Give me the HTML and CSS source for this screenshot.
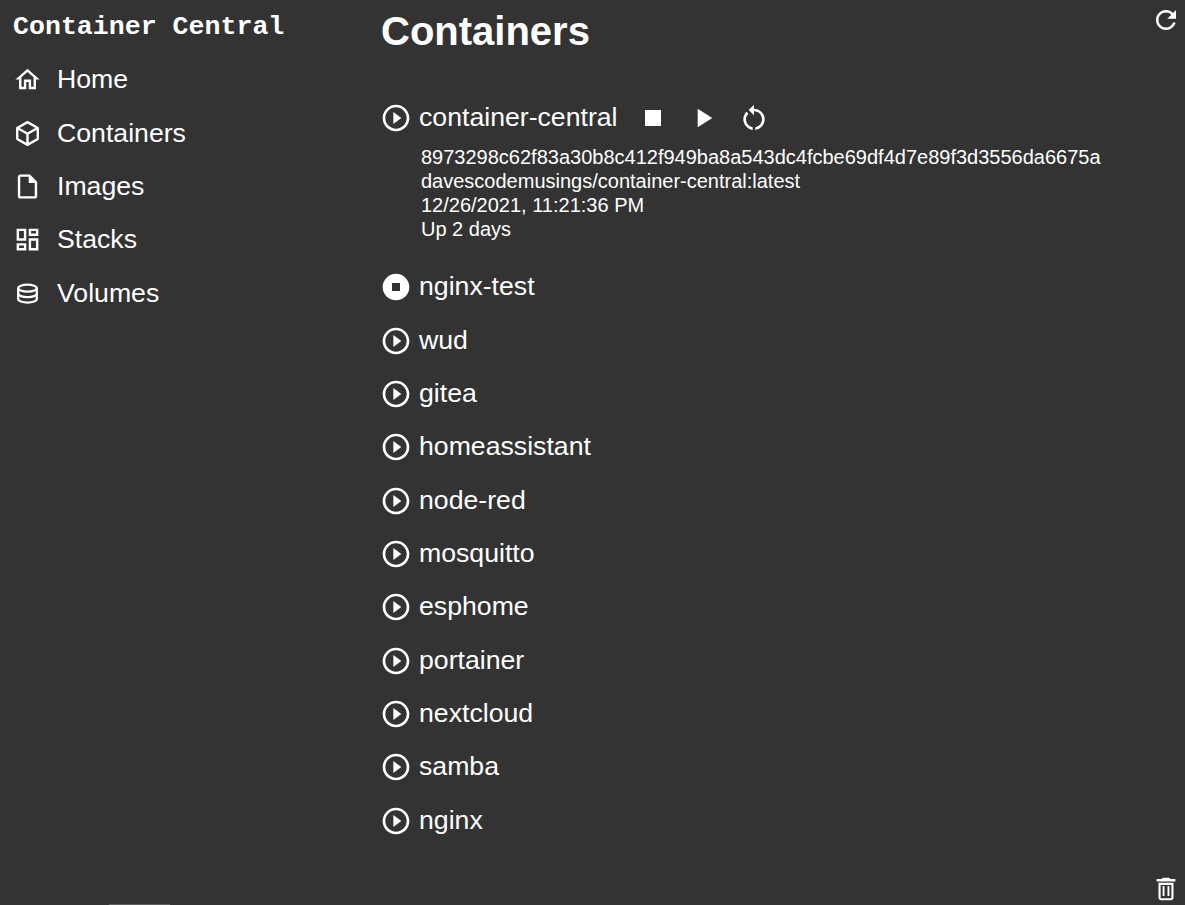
FILE: index.html
```html
<!DOCTYPE html>
<html lang="en">
<head>
    <meta charset="UTF-8"/>
    <meta name="viewport" content="width=device-width, initial-scale=1"/>
    <title>Container Central</title>
    <link rel="stylesheet" href="styles.css">
</head>
<body>

<!-- Icons -->
<svg class="icon-defs" xmlns="http://www.w3.org/2000/svg" aria-hidden="true">
    <symbol id="i-home" viewBox="0 0 24 24"><path d="M12 5.690l5 4.500V18h-2v-6H9v6H7v-7.810l5-4.500M12 3L2 12h3v8h6v-6h2v6h6v-8h3L12 3z"/></symbol>
    <symbol id="i-box" viewBox="0 0 24 24"><path d="M12 2.600l8.500 4.800v9.200L12 21.400l-8.500-4.800V7.400z M4 7.600l8 4.600 8-4.600 M12 12.200V21" fill="none" stroke="currentColor" stroke-width="2" stroke-linejoin="round"/></symbol>
    <symbol id="i-file" viewBox="0 0 24 24"><path d="M14 2H6c-1.100 0-2 .9-2 2v16c0 1.100.9 2 2 2h12c1.100 0 2-.9 2-2V8l-6-6zM6 20V4h7v5h5v11H6z"/></symbol>
    <symbol id="i-stacks" viewBox="0 0 24 24"><path d="M19 5v2h-4V5h4M9 5v6H5V5h4m10 8v6h-4v-6h4M9 17v2H5v-2h4M21 3h-8v6h8V3zM11 3H3v10h8V3zm10 8h-8v10h8V11zm-10 4H3v6h8v-6z"/></symbol>
    <symbol id="i-db" viewBox="0 0 24 24"><g fill="none" stroke="currentColor" stroke-width="1.900"><ellipse cx="12" cy="7.600" rx="7.700" ry="2.900"/><path d="M4.300 7.600v9c0 1.600 3.400 2.900 7.700 2.900s7.700-1.300 7.700-2.900v-9"/><path d="M4.300 12.100c0 1.600 3.400 2.900 7.700 2.900s7.700-1.300 7.700-2.900"/></g></symbol>
    <symbol id="i-play-circle" viewBox="0 0 24 24"><path d="M10 16.500l6-4.500-6-4.500v9zM12 2C6.480 2 2 6.480 2 12s4.480 10 10 10 10-4.480 10-10S17.520 2 12 2zm0 18c-4.410 0-8-3.590-8-8s3.590-8 8-8 8 3.590 8 8-3.590 8-8 8z"/></symbol>
    <symbol id="i-stop-circle" viewBox="0 0 24 24"><path d="M12 2C6.480 2 2 6.480 2 12s4.480 10 10 10 10-4.480 10-10S17.520 2 12 2zm3 13H9V9h6v6z"/></symbol>
    <symbol id="i-stop" viewBox="0 0 24 24"><path d="M6 6h12v12H6z"/></symbol>
    <symbol id="i-play" viewBox="0 0 24 24"><path d="M8 5v14l11-7z"/></symbol>
    <symbol id="i-restart" viewBox="0 0 24 24"><path d="M12 5V2L8 6l4 4V7c3.310 0 6 2.690 6 6 0 2.970-2.170 5.430-5 5.910v2.020c3.950-.49 7-3.850 7-7.930 0-4.420-3.580-8-8-8zm-6 8c0-1.650.67-3.150 1.760-4.240L6.340 7.340C4.900 8.790 4 10.790 4 13c0 4.080 3.050 7.440 7 7.930v-2.020c-2.830-.48-5-2.940-5-5.910z"/></symbol>
    <symbol id="i-refresh" viewBox="0 0 24 24"><path d="M17.650 6.350C16.200 4.900 14.210 4 12 4c-4.420 0-7.990 3.580-7.990 8s3.570 8 7.990 8c3.730 0 6.840-2.550 7.730-6h-2.080c-.82 2.330-3.040 4-5.650 4-3.310 0-6-2.690-6-6s2.690-6 6-6c1.660 0 3.140.69 4.220 1.780L13 11h7V4l-2.350 2.350z"/></symbol>
    <symbol id="i-trash" viewBox="0 0 24 24"><path d="M6 19c0 1.100.9 2 2 2h8c1.100 0 2-.9 2-2V7H6v12zM7.700 8.700h8.600v10.600H7.700zM15.500 4l-1-1h-5l-1 1H4.500v2h15V4z" fill-rule="evenodd"/><path d="M9.300 9.500h1.500v8H9.300zM13.200 9.500h1.500v8h-1.500z"/></symbol>
</svg>

<div class="layout">
    <nav class="sidebar">
        <div class="brand">Container Central</div>
        <a class="nav-item" href="#"><svg class="icon"><use href="#i-home"/></svg>Home</a>
        <a class="nav-item" href="#"><svg class="icon"><use href="#i-box"/></svg>Containers</a>
        <a class="nav-item" href="#"><svg class="icon"><use href="#i-file"/></svg>Images</a>
        <a class="nav-item" href="#"><svg class="icon"><use href="#i-stacks"/></svg>Stacks</a>
        <a class="nav-item" href="#"><svg class="icon"><use href="#i-db"/></svg>Volumes</a>
    </nav>

    <main class="content">
        <h1>Containers</h1>
        <ul class="container-list">
            <li class="container open">
                <div class="row">
                    <svg class="state"><use href="#i-play-circle"/></svg>
                    <span class="name">container-central</span>
                    <span class="actions">
                        <svg class="action"><use href="#i-stop"/></svg>
                        <svg class="action"><use href="#i-play"/></svg>
                        <svg class="action"><use href="#i-restart"/></svg>
                    </span>
                </div>
                <div class="details">
                    <div>8973298c62f83a30b8c412f949ba8a543dc4fcbe69df4d7e89f3d3556da6675a</div>
                    <div>davescodemusings/container-central:latest</div>
                    <div>12/26/2021, 11:21:36 PM</div>
                    <div>Up 2 days</div>
                </div>
            </li>
            <li class="container"><div class="row"><svg class="state"><use href="#i-stop-circle"/></svg><span class="name">nginx-test</span></div></li>
            <li class="container"><div class="row"><svg class="state"><use href="#i-play-circle"/></svg><span class="name">wud</span></div></li>
            <li class="container"><div class="row"><svg class="state"><use href="#i-play-circle"/></svg><span class="name">gitea</span></div></li>
            <li class="container"><div class="row"><svg class="state"><use href="#i-play-circle"/></svg><span class="name">homeassistant</span></div></li>
            <li class="container"><div class="row"><svg class="state"><use href="#i-play-circle"/></svg><span class="name">node-red</span></div></li>
            <li class="container"><div class="row"><svg class="state"><use href="#i-play-circle"/></svg><span class="name">mosquitto</span></div></li>
            <li class="container"><div class="row"><svg class="state"><use href="#i-play-circle"/></svg><span class="name">esphome</span></div></li>
            <li class="container"><div class="row"><svg class="state"><use href="#i-play-circle"/></svg><span class="name">portainer</span></div></li>
            <li class="container"><div class="row"><svg class="state"><use href="#i-play-circle"/></svg><span class="name">nextcloud</span></div></li>
            <li class="container"><div class="row"><svg class="state"><use href="#i-play-circle"/></svg><span class="name">samba</span></div></li>
            <li class="container"><div class="row"><svg class="state"><use href="#i-play-circle"/></svg><span class="name">nginx</span></div></li>
        </ul>
    </main>

    <aside class="tools">
        <svg class="tool"><use href="#i-refresh"/></svg>
        <svg class="tool"><use href="#i-trash"/></svg>
    </aside>
</div>

<div class="scroll-thumb"></div>

</body>
</html>
```

FILE: styles.css
```css
html, body {
  height: 100%;
}
body {
  margin: 0;
  background-color: #333;
  color: #fff;
  font-family: "Liberation Sans", Arial, sans-serif;
  overflow: hidden;
  position: relative;
}
a {
  color: inherit;
  text-decoration: none;
}
svg {
  fill: currentColor;
  display: block;
  flex-shrink: 0;
}
.icon-defs {
  width: 0;
  height: 0;
  position: absolute;
}
.layout {
  display: flex;
  height: 100%;
}

/* Side navigation */
.sidebar {
  width: 381px;
  flex-shrink: 0;
  padding: 10px 0 0 13px;
  box-sizing: border-box;
}
.brand {
  font-family: "Liberation Mono", "Courier New", monospace;
  font-weight: bold;
  font-size: 26.6px;
  line-height: 34px;
  margin-bottom: 9.1px;
}
.nav-item {
  display: flex;
  align-items: center;
  gap: 15px;
  height: 53.33px;
  font-size: 26.67px;
}
.icon {
  width: 29px;
  height: 29px;
}

/* Main list */
.content {
  flex: 1;
  min-width: 0;
}
h1 {
  font-size: 40px;
  line-height: 44px;
  margin: 9px 0 38px;
}
.container-list {
  list-style: none;
  margin: 0;
  padding: 0;
}
.row {
  display: flex;
  align-items: center;
  height: 53.33px;
}
.state {
  width: 32px;
  height: 32px;
  margin: 1px 7px 0 -1px;
}
.name {
  font-size: 26.67px;
}
.actions {
  display: flex;
  gap: 18.67px;
  margin-left: 19px;
}
.action {
  width: 32px;
  height: 32px;
}
.details {
  font-size: 20px;
  line-height: 24px;
  padding: 1px 0 19px 40px;
}

/* Refresh and delete */
.tools {
  width: 30px;
  flex-shrink: 0;
  display: flex;
  flex-direction: column;
  justify-content: space-between;
  padding: 5px 4px 1px 0;
}
.tool {
  width: 30px;
  height: 30px;
}

.scroll-thumb {
  position: absolute;
  left: 109px;
  bottom: 0;
  width: 61px;
  height: 1px;
  background-color: #5f5f5f;
}
```
